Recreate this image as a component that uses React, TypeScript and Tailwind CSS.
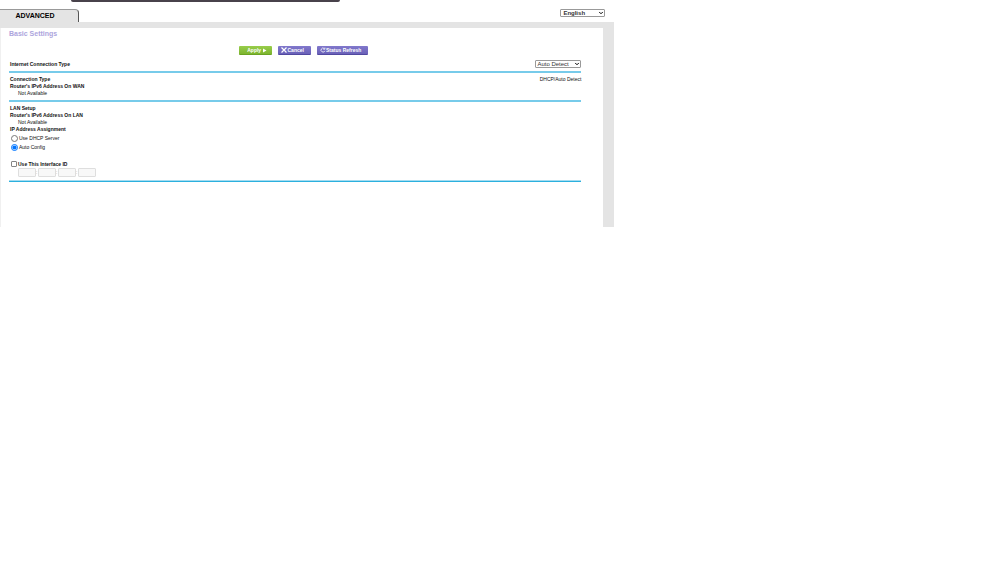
import React from 'react';
import { ChevronDown } from 'lucide-react';

type SelectBoxProps = {
    label: string;
    options: string[];
    className: string;
};

const SelectBox = ({ label, options, className }: SelectBoxProps) => (
    <div className="relative flex">
        <select
            aria-label={label}
            className={`appearance-none rounded-[1px] border border-[#999] bg-white text-[6px] leading-[6px] text-[#333] ${className}`}
        >
            {options.map(option => (
                <option key={option}>{option}</option>
            ))}
        </select>
        <ChevronDown
            className="pointer-events-none absolute right-px top-px h-[6px] w-[6px] text-black"
            strokeWidth={4}
        />
    </div>
);

const Divider = () => <hr className="h-[2px] border-0 bg-[#77cbea]" />;

const buttonBase = 'flex h-[9px] items-center justify-center rounded-[1px] text-[5px] leading-[7px] font-bold text-white';
const purple = 'border-b border-[#5148a0] bg-linear-to-b from-[#8178cc] to-[#6a61b8]';

const InterfaceIdFields = () => (
    <div className="flex items-center pl-[9px] text-[5px] leading-[9px] text-[#888]">
        {[1, 2, 3, 4].map(part => (
            <React.Fragment key={part}>
                {part > 1 && <span className="w-[2px]">:</span>}
                <input
                    type="text"
                    disabled
                    aria-label={`Interface ID part ${part}`}
                    className="h-[9px] w-[18px] rounded-[1px] border border-[#dedede] bg-[#f8f8f8]"
                />
            </React.Fragment>
        ))}
    </div>
);

export default function App() {
    const [assignment, setAssignment] = React.useState('auto');
    const [useInterfaceId, setUseInterfaceId] = React.useState(false);

    return (
        <div className="min-h-screen bg-white font-['Liberation_Sans',Arial,sans-serif] text-[5px] leading-[7px] text-[#111]">
            <div className="w-[61.5%]">

                {/* Tab bar */}
                <header>
                    <div className="ml-[71px] mr-[44.6%] h-[2px] rounded-b-[2px] bg-[#48424b]" />
                    <div className="flex items-start justify-between pr-[9px] pt-[7px]">
                        <button
                            type="button"
                            className="h-[13px] w-[79px] rounded-tr-[4px] border-r border-t border-r-[#555] border-t-[#999] bg-[#e4e4e4] pr-[8px] text-[7px] leading-[10px] font-bold text-black"
                        >
                            ADVANCED
                        </button>
                        <SelectBox label="Language" options={['English']} className="h-[8px] w-[45px] pl-[2px] font-bold" />
                    </div>
                </header>

                {/* Grey frame along the top and right side */}
                <div className="border-r-[11px] border-t-[6px] border-[#e4e4e4]">
                    <main className="border-l border-[#f0f0f0] pb-[45px] pl-[8px] pr-[22px]">
                        <h1 className="pt-px text-[7px] leading-[9px] font-bold text-[#ada5dd]">Basic Settings</h1>

                        <div className="mt-[8px] flex justify-center gap-[6px] pl-[16px]">
                            <button type="button" className={`${buttonBase} w-[33px] gap-px border-b border-[#6aa322] bg-linear-to-b from-[#98cd4b] to-[#7db52e]`}>
                                <span className="pl-[4px]">Apply</span>
                                <svg viewBox="0 0 5 5" className="h-[5px] w-[5px]" fill="currentColor">
                                    <path d="M1 0.5 4.5 2.5 1 4.5Z" />
                                </svg>
                            </button>
                            <button type="button" className={`${buttonBase} ${purple} w-[33px] pr-[3px]`}>
                                <svg viewBox="0 0 6 6" className="h-[6px] w-[6px]" fill="none" stroke="currentColor" strokeWidth="1.2">
                                    <path d="M0.5 0.5 5.5 5.5M5.5 0.5 0.5 5.5" />
                                </svg>
                                Cancel
                            </button>
                            <button type="button" className={`${buttonBase} ${purple} w-[51px] pr-[3px]`}>
                                <svg viewBox="0 0 6 6" className="h-[6px] w-[6px]" fill="none" stroke="currentColor" strokeWidth="0.8">
                                    <path d="M4.3 1.5A2 2 0 1 0 4.9 3.8M4.9 0.6V2.2H3.3" />
                                </svg>
                                Status Refresh
                            </button>
                        </div>

                        <div>
                            <div className="mt-[5px] flex items-center justify-between pb-[3px]">
                                <h2 className="pl-px font-bold">Internet Connection Type</h2>
                                <SelectBox label="Internet Connection Type" options={['Auto Detect']} className="h-[8px] w-[46px] pl-px" />
                            </div>
                            <Divider />

                            <section className="pb-[3px] pt-[3px] pl-px">
                                <div className="flex justify-between">
                                    <h2 className="font-bold">Connection Type</h2>
                                    <span>DHCP/Auto Detect</span>
                                </div>
                                <h3 className="font-bold">Router's IPv6 Address On WAN</h3>
                                <p className="pl-[8px]">Not Available</p>
                            </section>
                            <Divider />

                            <section className="pb-[3px] pt-[3px]">
                                <div className="pl-px">
                                    <h2 className="font-bold">LAN Setup</h2>
                                    <h3 className="font-bold">Router's IPv6 Address On LAN</h3>
                                    <p className="pl-[8px]">Not Available</p>
                                </div>
                                <fieldset>
                                    <legend className="pl-px font-bold">IP Address Assignment</legend>
                                    <label className="mt-px flex h-[9px] items-center gap-px pl-[2px]">
                                        <input
                                            type="radio"
                                            name="assignment"
                                            checked={assignment === 'dhcp'}
                                            onChange={() => setAssignment('dhcp')}
                                            className="h-[7px] w-[7px] accent-[#0075ff]"
                                        />
                                        Use DHCP Server
                                    </label>
                                    <label className="flex h-[9px] items-center gap-px pl-[2px]">
                                        <input
                                            type="radio"
                                            name="assignment"
                                            checked={assignment === 'auto'}
                                            onChange={() => setAssignment('auto')}
                                            className="h-[7px] w-[7px] accent-[#0075ff]"
                                        />
                                        Auto Config
                                    </label>
                                </fieldset>
                                <label className="mt-[8px] flex h-[8px] items-center gap-px pl-[2px] font-bold">
                                    <input
                                        type="checkbox"
                                        checked={useInterfaceId}
                                        onChange={e => setUseInterfaceId(e.target.checked)}
                                        className="h-[6px] w-[6px] appearance-none rounded-[1px] border border-[#858585] bg-white checked:bg-[#0075ff]"
                                    />
                                    Use This Interface ID
                                </label>
                                <InterfaceIdFields />
                            </section>
                            <hr className="h-[2px] border-0 border-t border-[#a5dcf0] bg-[#2cb0de]" />
                        </div>
                    </main>
                </div>
            </div>
        </div>
    );
}
